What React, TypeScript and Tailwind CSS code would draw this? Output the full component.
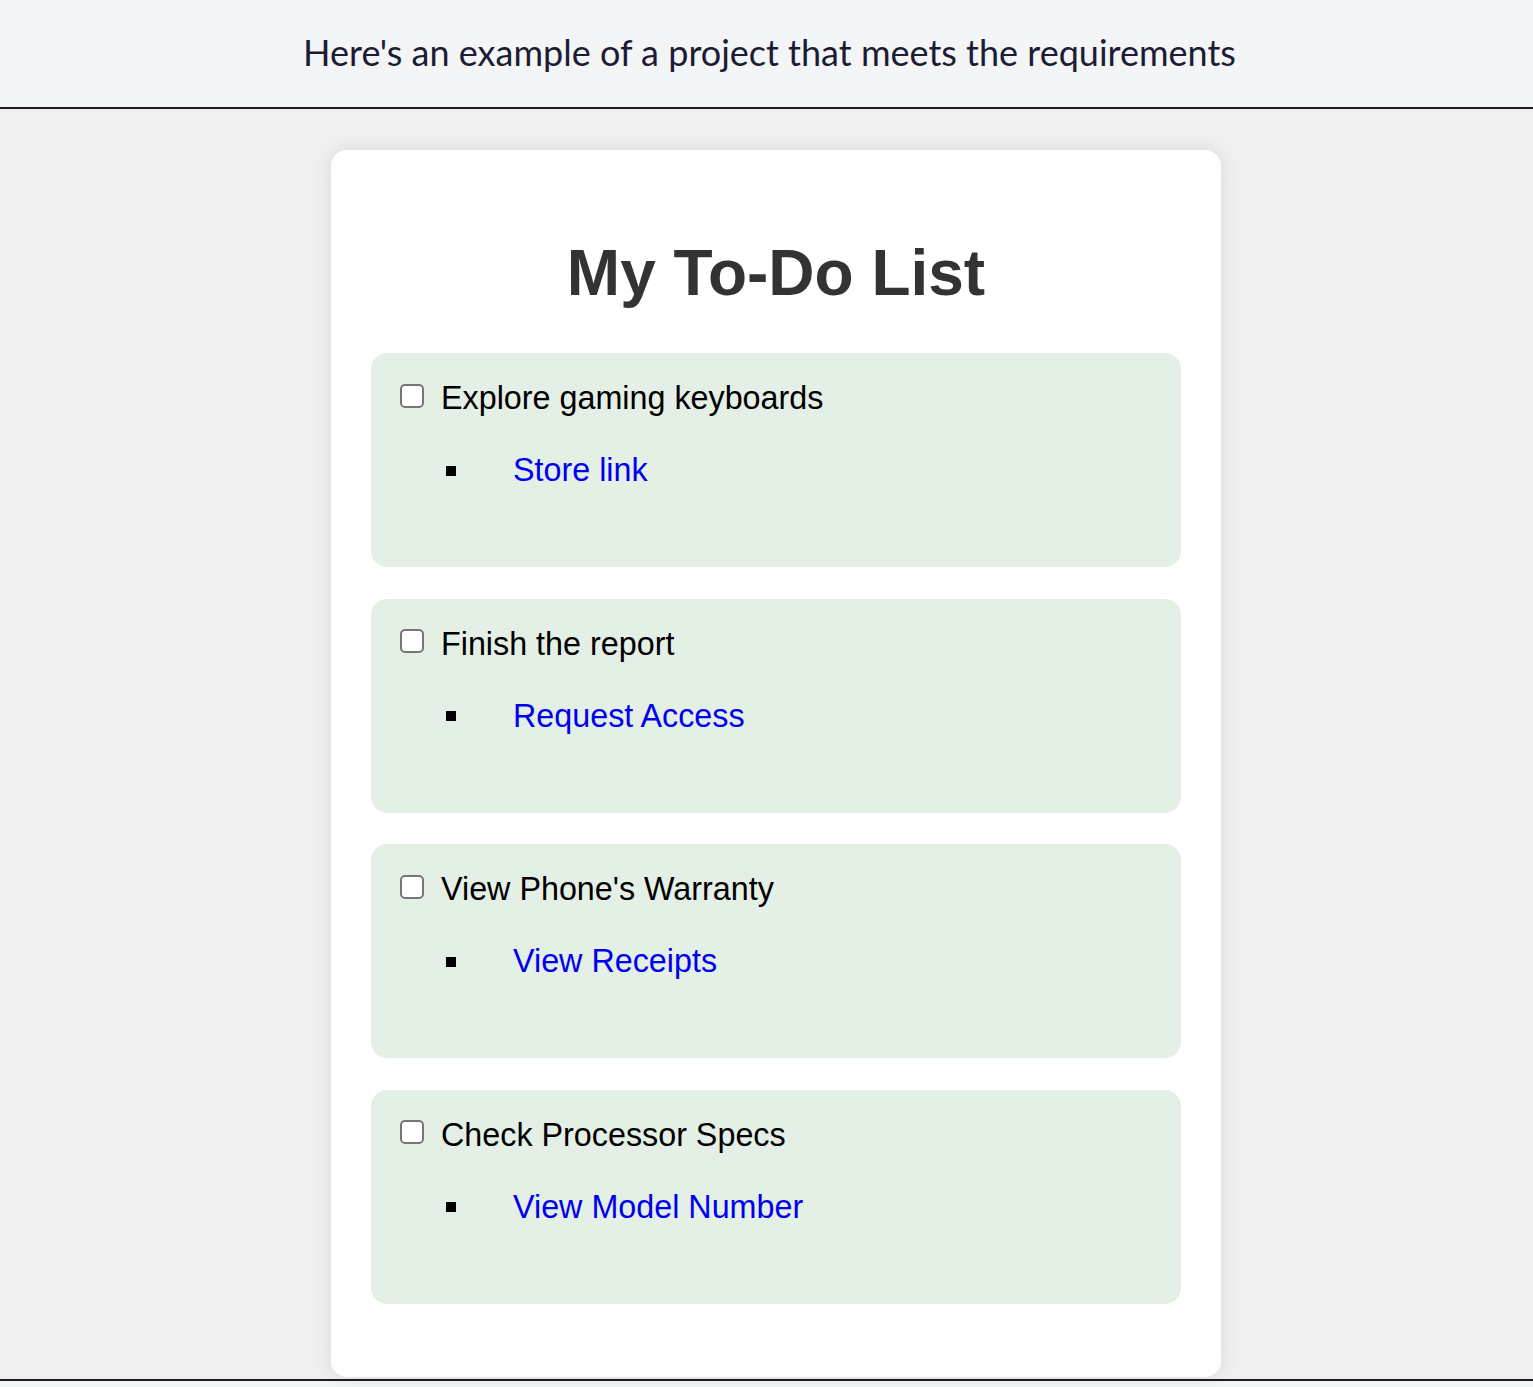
const todos = [
  { task: "Explore gaming keyboards", link: "Store link" },
  { task: "Finish the report", link: "Request Access" },
  { task: "View Phone's Warranty", link: "View Receipts" },
  { task: "Check Processor Specs", link: "View Model Number" },
];

function TodoItem({ task, link }: { task: string; link: string }) {
  return (
    <li className="bg-[#e4efe5] rounded-[16px] pt-[27px] pb-[78px] pl-[29px]">
      <label className="flex items-center h-[37px] gap-[17px] text-[32.3px] text-black">
        <input
          type="checkbox"
          className="appearance-none w-[24px] h-[24px] m-0 mb-[6px] bg-white border-2 border-[#767676] rounded-[5px] shrink-0"
        />
        <span>{task}</span>
      </label>
      <div className="flex items-center h-[37px] mt-[35px] pl-[46px]">
        <span className="w-[10px] h-[10px] bg-black" />
        <a href="#" className="ml-[57px] text-[32.3px] text-[#0000ee]">
          {link}
        </a>
      </div>
    </li>
  );
}

export default function App() {
  return (
    <div className="min-h-screen bg-[#f4f5f7] font-['Liberation_Sans',Arial,sans-serif]">
      <header className="h-[109px] border-b-2 border-[#1a1a2e] flex justify-center pt-[30px] pl-[6px]">
        <p className="font-['Lato',sans-serif] text-[36px] leading-[45px] text-[#1c1d35]">
          Here's an example of a project that meets the requirements
        </p>
      </header>

      <main className="bg-[#f0f0f0] border-b-2 border-[#1a1a2e] pt-[41px] pb-[2.5px] pl-[19px]">
        <div className="mx-auto w-[890px] bg-white rounded-[16px] shadow-[0_0_20px_rgba(0,0,0,0.1)] px-10 pt-10 pb-[73px]">
          <h1 className="mt-[46px] mb-[43px] text-center text-[64px] leading-[74px] font-bold text-[#333]">
            My To-Do List
          </h1>
          <ul className="flex flex-col gap-[31.5px]">
            {todos.map((t) => (
              <TodoItem key={t.task} task={t.task} link={t.link} />
            ))}
          </ul>
        </div>
      </main>
    </div>
  );
}
